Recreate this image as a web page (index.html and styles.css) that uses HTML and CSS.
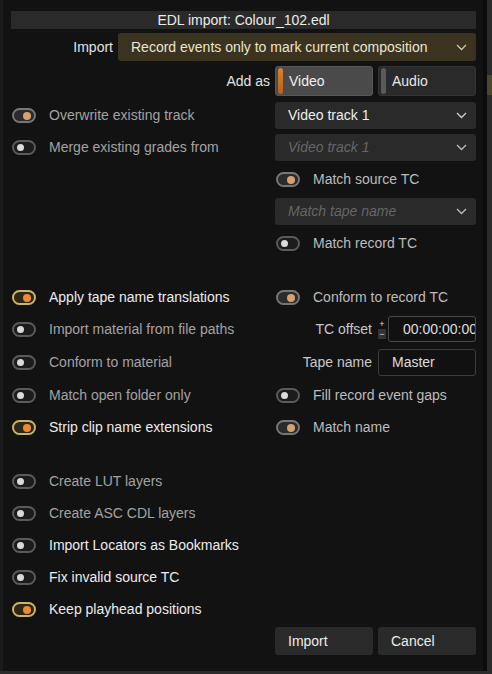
FILE: index.html
```html
<!DOCTYPE html>
<html>
<head>
<meta charset="utf-8">
<link rel="stylesheet" href="styles.css">
</head>
<body>
<div class="window">
  <div class="titlebar">EDL import: Colour_102.edl</div>

  <div class="import-row">
    <span class="lbl import-lbl">Import</span>
    <div class="select olive">
      <span>Record events only to mark current composition</span>
      <svg class="chev" width="11" height="7" viewBox="0 0 11 7"><polyline points="1,1 5.5,5.5 10,1" fill="none" stroke="#cfc8a8" stroke-width="1.3"/></svg>
    </div>
  </div>

  <div class="addas-row">
    <span class="lbl addas-lbl">Add as</span>
    <div class="seg seg-on"><span class="stripe"></span>Video</div>
    <div class="seg seg-off"><span class="stripe"></span>Audio</div>
  </div>

  <div class="section sec-a">
    <div class="row">
      <div class="cell-l"><span class="tog on-muted"><i></i></span><span class="txt gray">Overwrite existing track</span></div>
      <div class="cell-r"><div class="select dark"><span>Video track 1</span><svg class="chev" width="11" height="7" viewBox="0 0 11 7"><polyline points="1,1 5.5,5.5 10,1" fill="none" stroke="#cfcfcf" stroke-width="1.3"/></svg></div></div>
    </div>
    <div class="row">
      <div class="cell-l"><span class="tog off"><i></i></span><span class="txt gray">Merge existing grades from</span></div>
      <div class="cell-r"><div class="select dark disabled"><span>Video track 1</span><svg class="chev" width="11" height="7" viewBox="0 0 11 7"><polyline points="1,1 5.5,5.5 10,1" fill="none" stroke="#bdbdbd" stroke-width="1.3"/></svg></div></div>
    </div>
    <div class="row">
      <div class="cell-l"></div>
      <div class="cell-r"><span class="tog on-muted r"><i></i></span><span class="txt light">Match source TC</span></div>
    </div>
    <div class="row">
      <div class="cell-l"></div>
      <div class="cell-r"><div class="select dark disabled"><span>Match tape name</span><svg class="chev" width="11" height="7" viewBox="0 0 11 7"><polyline points="1,1 5.5,5.5 10,1" fill="none" stroke="#bdbdbd" stroke-width="1.3"/></svg></div></div>
    </div>
    <div class="row">
      <div class="cell-l"></div>
      <div class="cell-r"><span class="tog off r"><i></i></span><span class="txt light">Match record TC</span></div>
    </div>
  </div>

  <div class="section sec-b">
    <div class="row">
      <div class="cell-l"><span class="tog on-active"><i></i></span><span class="txt white">Apply tape name translations</span></div>
      <div class="cell-r"><span class="tog on-muted r"><i></i></span><span class="txt light">Conform to record TC</span></div>
    </div>
    <div class="row">
      <div class="cell-l"><span class="tog off"><i></i></span><span class="txt gray">Import material from file paths</span></div>
      <div class="cell-r">
        <span class="rlbl">TC offset</span>
        <span class="spin"><b class="plus">+</b><b class="minus">−</b></span>
        <div class="input tc">00:00:00:00</div>
      </div>
    </div>
    <div class="row tall">
      <div class="cell-l"><span class="tog off"><i></i></span><span class="txt gray">Conform to material</span></div>
      <div class="cell-r">
        <span class="rlbl">Tape name</span>
        <div class="input tape">Master</div>
      </div>
    </div>
    <div class="row">
      <div class="cell-l"><span class="tog off"><i></i></span><span class="txt gray">Match open folder only</span></div>
      <div class="cell-r"><span class="tog off r"><i></i></span><span class="txt light">Fill record event gaps</span></div>
    </div>
    <div class="row">
      <div class="cell-l"><span class="tog on-active"><i></i></span><span class="txt white">Strip clip name extensions</span></div>
      <div class="cell-r"><span class="tog on-muted r"><i></i></span><span class="txt light">Match name</span></div>
    </div>
  </div>

  <div class="section sec-c">
    <div class="row"><div class="cell-l"><span class="tog off"><i></i></span><span class="txt gray">Create LUT layers</span></div></div>
    <div class="row"><div class="cell-l"><span class="tog off"><i></i></span><span class="txt gray">Create ASC CDL layers</span></div></div>
    <div class="row"><div class="cell-l"><span class="tog off"><i></i></span><span class="txt white">Import Locators as Bookmarks</span></div></div>
    <div class="row"><div class="cell-l"><span class="tog off"><i></i></span><span class="txt white">Fix invalid source TC</span></div></div>
    <div class="row"><div class="cell-l"><span class="tog on-active"><i></i></span><span class="txt white">Keep playhead positions</span></div></div>
  </div>

  <div class="buttons">
    <div class="btn">Import</div>
    <div class="btn">Cancel</div>
  </div>
</div>
<div class="peek"></div>
</body>
</html>
```

FILE: styles.css
```css
html, body {
  margin: 0;
  padding: 0;
}
body {
  width: 492px;
  height: 674px;
  background: #2b2b2b;
  font-family: "Liberation Sans", Arial, sans-serif;
  font-size: 14px;
  color: #e6e6e6;
  position: relative;
  overflow: hidden;
}
.window {
  box-sizing: border-box;
  width: 487px;
  height: 671px;
  background: #121212;
  border-left: 3px solid #1b1b1b;
  border-right: 4px solid #0b0b0b;
  padding: 11px 0 0 8px;
  display: flex;
  flex-direction: column;
}
.peek {
  position: absolute;
  left: 487px;
  top: 75px;
  width: 5px;
  height: 20px;
  background: #4a4630;
}
.titlebar {
  width: 465px;
  height: 18px;
  line-height: 18px;
  background: #2a2a2a;
  text-align: center;
  color: #ececec;
}
.import-row {
  margin-top: 4px;
  display: flex;
  align-items: center;
  height: 28px;
}
.lbl {
  color: #e2e2e2;
  text-align: right;
}
.import-lbl {
  width: 102px;
  margin-right: 5px;
}
.select {
  box-sizing: border-box;
  display: flex;
  align-items: center;
  justify-content: space-between;
  border-radius: 3px;
  padding: 0 9px 0 13px;
}
.select.olive {
  width: 358px;
  height: 28px;
  background: #39331f;
  color: #ebe6cc;
}
.select.dark {
  width: 201px;
  height: 27px;
  background: #2a2a2a;
  color: #efefef;
}
.select.disabled {
  color: #666;
  font-style: italic;
}
.chev {
  display: block;
}
.addas-row {
  margin-top: 5px;
  display: flex;
  align-items: center;
  height: 30px;
}
.addas-lbl {
  width: 259px;
  margin-right: 5px;
}
.seg {
  box-sizing: border-box;
  width: 98px;
  height: 30px;
  border-radius: 3px;
  display: flex;
  align-items: center;
  padding-left: 2px;
}
.seg + .seg {
  margin-left: 5px;
}
.seg .stripe {
  width: 5px;
  height: 26px;
  border-radius: 3px;
  margin-right: 6px;
}
.seg-on {
  background: #4a4a4a;
  border: 1px solid #585858;
  color: #f0f0f0;
}
.seg-on .stripe {
  background: linear-gradient(#d9822e, #b8601c);
}
.seg-off {
  background: #2a2a2a;
  border: 1px solid #333;
  color: #e8e8e8;
}
.seg-off .stripe {
  background: #5a5a5a;
}
.section {
  display: flex;
  flex-direction: column;
}
.sec-a { margin-top: 3px; }
.sec-b { margin-top: 22px; }
.sec-c { margin-top: 22px; }
.row {
  display: flex;
  height: 32px;
}
.row.tall {
  height: 34px;
}
.cell-l {
  width: 264px;
  display: flex;
  align-items: center;
}
.cell-r {
  width: 201px;
  display: flex;
  align-items: center;
}
.tog {
  box-sizing: border-box;
  width: 24px;
  height: 15px;
  border-radius: 8px;
  border: 2px solid #5a5a5a;
  background: #1c1c1c;
  position: relative;
  margin-left: 1px;
  margin-right: 13px;
  flex: none;
}
.tog i {
  position: absolute;
  top: 2.5px;
  left: 3px;
  width: 7px;
  height: 7px;
  border-radius: 50%;
  background: #dadada;
}
.tog.on-muted {
  border-color: #767676;
  background: #2c2c2c;
}
.tog.on-muted i {
  left: auto;
  right: 3px;
  width: 8px;
  height: 8px;
  top: 2px;
  background: #d7a072;
}
.tog.on-active {
  border-color: #c7b56a;
  background: #2e2616;
}
.tog.on-active i {
  left: auto;
  right: 3px;
  width: 8px;
  height: 8px;
  top: 2px;
  background: #f08a30;
}
.txt.gray { color: #a3a3a3; }
.txt.white { color: #ececec; }
.txt.light { color: #bcbcbc; }
.rlbl {
  width: 97px;
  text-align: right;
  color: #c8c8c8;
  flex: none;
}
.spin {
  width: 8px;
  margin-left: 6px;
  margin-right: 2px;
  display: flex;
  flex-direction: column;
  align-items: center;
  flex: none;
}
.spin b {
  font-weight: normal;
  font-size: 9px;
  line-height: 10px;
  height: 10px;
  color: #dcdcdc;
  width: 8px;
  text-align: center;
  overflow: hidden;
}
.spin .minus {
  background: #333;
}
.input {
  box-sizing: border-box;
  height: 26px;
  line-height: 24px;
  background: #111;
  border: 1px solid #3c3c3c;
  border-radius: 3px;
  white-space: nowrap;
  overflow: hidden;
  color: #dedede;
}
.input.tc {
  width: 88px;
  padding-left: 14px;
  border-color: #4a4a4a;
}
.input.tape {
  width: 98px;
  height: 27px;
  margin-left: 6px;
  padding-left: 13px;
}
.buttons {
  margin-top: 2px;
  display: flex;
  padding-left: 264px;
}
.btn {
  box-sizing: border-box;
  width: 98px;
  height: 28px;
  line-height: 28px;
  background: #2a2a2a;
  border-radius: 3px;
  padding-left: 13px;
  color: #ececec;
}
.btn + .btn {
  margin-left: 5px;
}
```
